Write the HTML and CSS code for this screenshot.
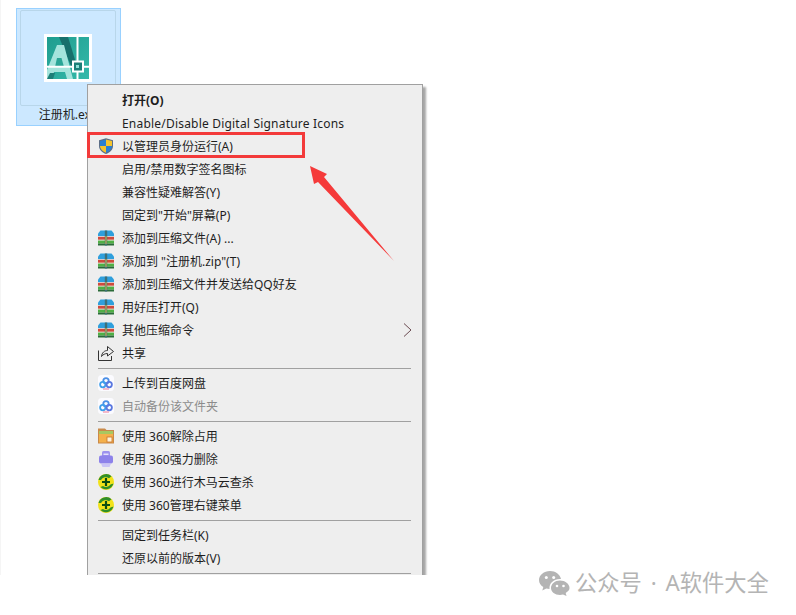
FILE: index.html
```html
<!DOCTYPE html>
<html lang="en">
<head>
    <meta charset="UTF-8">
    <title>Context menu</title>
    <link rel="stylesheet" href="styles.css">
</head>
<body>
    <svg class="defs" width="0" height="0">
        <symbol id="i-rar" viewBox="0 0 16 16">
            <path d="M2.500 0.500h11l2.500 3V6H0V3.500z" fill="#2f9fdc"/>
            <rect x="0" y="6" width="16" height="0.800" fill="#d8e8ee"/>
            <rect x="0" y="6.800" width="16" height="3" fill="#cf4a3c"/>
            <rect x="0" y="9.800" width="16" height="0.800" fill="#e8e0c8"/>
            <rect x="0" y="10.600" width="16" height="3" fill="#4fb045"/>
            <rect x="0" y="13.600" width="16" height="1.900" fill="#2a6a38"/>
            <rect x="6.800" y="0.500" width="2.400" height="15" fill="#3d6f78"/>
            <rect x="7.500" y="6" width="1" height="8" fill="#e6c04a"/>
        </symbol>
        <symbol id="i-baidu" viewBox="0 0 16 16">
            <rect width="16" height="16" rx="3.500" fill="#fbfbff"/>
            <circle cx="8" cy="5.800" r="2.700" fill="none" stroke="#4a8fe6" stroke-width="1.800"/>
            <circle cx="4.800" cy="9.600" r="2.700" fill="none" stroke="#3f9fea" stroke-width="1.800"/>
            <circle cx="11.200" cy="9.600" r="2.700" fill="none" stroke="#5a78e0" stroke-width="1.800"/>
            <path d="M5 14h6" stroke="#f08fa8" stroke-width="1.200"/>
        </symbol>
        <symbol id="i-360" viewBox="0 0 16 16">
            <circle cx="8" cy="8" r="8" fill="#f2e21a"/>
            <path d="M0.500 6A7.800 7.800 0 0 1 13.500 2.300L11 4.300A5.500 5.500 0 0 0 3 6z" fill="#2f8f2a"/>
            <path d="M2.500 13A7.800 7.800 0 0 0 15.500 9.500L12.500 10.500A5.500 5.500 0 0 1 5 12z" fill="#2f8f2a"/>
            <path d="M8 4v8M4 8h8" stroke="#0d4f12" stroke-width="2.200"/>
        </symbol>
    </svg>

    <div class="shot">
        <div class="tile">
            <div class="tile-frame">
                <svg class="app-icon" width="48" height="48" viewBox="0 0 48 48">
                    <defs>
                        <linearGradient id="teal" x1="0" y1="0" x2="1" y2="1">
                            <stop offset="0" stop-color="#1f9d8f"/>
                            <stop offset="1" stop-color="#35b9aa"/>
                        </linearGradient>
                    </defs>
                    <rect width="48" height="48" fill="#fff"/>
                    <rect x="3" y="3" width="42" height="42" fill="url(#teal)"/>
                    <path d="M15 3H24L33 32H27z" fill="#17706c"/>
                    <path d="M3 45V36L13 11H20L29 45H23L21 38H10L8 45z" fill="#a4e4dc"/>
                    <path d="M13 24L11 33H20L17.500 24z" fill="#2aa596"/>
                    <path d="M3 45H9L11 39H6z" fill="#1c7f78"/>
                    <path d="M33.500 3v42" stroke="#fff" stroke-width="2"/>
                    <path d="M3 32.700h42" stroke="#fff" stroke-width="2"/>
                    <rect x="29" y="27.500" width="10" height="10" fill="#1a7f78" stroke="#fff" stroke-width="2"/>
                    <rect x="32" y="31" width="3" height="3" fill="#8fe0d6"/>
                </svg>
            </div>
            <div class="tile-name">注册机.exe</div>
        </div>

        <div class="menu">
            <div class="row"><span class="ico"></span><b>打开(O)</b></div>
            <div class="row"><span class="ico"></span><span class="latin">Enable/Disable Digital Signature Icons</span></div>
            <div class="row">
                <span class="ico">
                    <svg width="16" height="16" viewBox="0 0 16 16">
                        <path d="M8 0.200L15 2.300V8C15 12 11.500 14.700 8 16C4.500 14.700 1 12 1 8V2.300z" fill="#5b6d86"/>
                        <path d="M8 1.400V8H2V3.100z" fill="#2a7fd0"/>
                        <path d="M8 1.400V8H14V3.100z" fill="#f5c42c"/>
                        <path d="M8 8H2C2.200 11.300 5.200 13.700 8 14.800z" fill="#f5c42c"/>
                        <path d="M8 8H14C13.800 11.300 10.800 13.700 8 14.800z" fill="#2a7fd0"/>
                    </svg>
                </span>
                <span>以管理员身份运行(A)</span>
            </div>
            <div class="row"><span class="ico"></span><span>启用/禁用数字签名图标</span></div>
            <div class="row"><span class="ico"></span><span>兼容性疑难解答(Y)</span></div>
            <div class="row"><span class="ico"></span><span>固定到"开始"屏幕(P)</span></div>
            <div class="row"><span class="ico"><svg width="16" height="16"><use href="#i-rar"/></svg></span><span>添加到压缩文件(A) ...</span></div>
            <div class="row"><span class="ico"><svg width="16" height="16"><use href="#i-rar"/></svg></span><span>添加到 "注册机.zip"(T)</span></div>
            <div class="row"><span class="ico"><svg width="16" height="16"><use href="#i-rar"/></svg></span><span>添加到压缩文件并发送给QQ好友</span></div>
            <div class="row"><span class="ico"><svg width="16" height="16"><use href="#i-rar"/></svg></span><span>用好压打开(Q)</span></div>
            <div class="row">
                <span class="ico"><svg width="16" height="16"><use href="#i-rar"/></svg></span>
                <span>其他压缩命令</span>
                <svg class="chev" width="9" height="14" viewBox="0 0 9 14"><path d="M1 0.500L8 7L1 13.500" fill="none" stroke="#6a4a50" stroke-width="1"/></svg>
            </div>
            <div class="row">
                <span class="ico">
                    <svg width="16" height="16" viewBox="0 0 16 16" fill="none" stroke="#333" stroke-width="1">
                        <path d="M0.500 5.500V15.500H13.500V11"/>
                        <path d="M3.500 11.500C4 7.500 6.500 5.500 9.500 5.500V1.500L15.500 6.500L9.500 11V8.500C7 8.500 5 9.500 3.500 11.500z"/>
                    </svg>
                </span>
                <span>共享</span>
            </div>
            <div class="sep"></div>
            <div class="row"><span class="ico"><svg width="16" height="16"><use href="#i-baidu"/></svg></span><span>上传到百度网盘</span></div>
            <div class="row off"><span class="ico"><svg width="16" height="16"><use href="#i-baidu"/></svg></span><span>自动备份该文件夹</span></div>
            <div class="sep"></div>
            <div class="row">
                <span class="ico">
                    <svg width="16" height="16" viewBox="0 0 16 16">
                        <path d="M0 0.500H7L8.500 2H16V15.500H0z" fill="#c98a4a"/>
                        <rect x="1" y="3" width="14" height="3" fill="#a8c860"/>
                        <rect x="1" y="6" width="14" height="8.500" fill="#f4b04a"/>
                        <rect x="9" y="9" width="5" height="5" fill="#fff3d8" stroke="#c9702a" stroke-width="0.800"/>
                    </svg>
                </span>
                <span>使用 360解除占用</span>
            </div>
            <div class="row">
                <span class="ico">
                    <svg width="16" height="16" viewBox="0 0 16 16">
                        <rect x="4" y="0" width="8" height="6" rx="1.500" fill="#9c92ee"/>
                        <rect x="1" y="4.500" width="14" height="8" rx="2" fill="#8d82ea"/>
                        <rect x="5.500" y="2.500" width="5" height="1.500" fill="#e4e0fb"/>
                        <path d="M3 12.500H13L11.500 16H4.500z" fill="#c9c4f6"/>
                    </svg>
                </span>
                <span>使用 360强力删除</span>
            </div>
            <div class="row"><span class="ico"><svg width="16" height="16"><use href="#i-360"/></svg></span><span>使用 360进行木马云查杀</span></div>
            <div class="row"><span class="ico"><svg width="16" height="16"><use href="#i-360"/></svg></span><span>使用 360管理右键菜单</span></div>
            <div class="sep"></div>
            <div class="row"><span class="ico"></span><span>固定到任务栏(K)</span></div>
            <div class="row"><span class="ico"></span><span>还原以前的版本(V)</span></div>
            <div class="sep"></div>
        </div>

        <div class="mark-box"></div>
        <svg class="mark-arrow" width="90" height="100" viewBox="0 0 90 100">
            <path d="M1 1L18 9L15 12L85 96L9 17L5 19z" fill="#f53a3a"/>
        </svg>
    </div>

    <div class="watermark">
        <svg width="31" height="25" viewBox="0 0 31 25">
            <path d="M11 0C5 0 0 4 0 9C0 12 1.700 14.500 4.300 16L3.300 19.500L7.300 17.500C8.300 17.800 9.500 18 10.500 18C10 12 15 7.500 22 8C21 3.500 16.500 0 11 0z" fill="#b4b4b4"/>
            <circle cx="7.300" cy="6.500" r="1.500" fill="#fff"/>
            <circle cx="14.700" cy="6.500" r="1.500" fill="#fff"/>
            <path d="M21 9.500C16 9.500 12 13 12 17C12 21 16 24 21 24C22 24 23 23.800 24 23.500L27.500 25L26.700 22C29 20.500 30.500 19 30.500 17C30.500 13 26 9.500 21 9.500z" fill="#b4b4b4"/>
            <circle cx="18" cy="15" r="1.300" fill="#fff"/>
            <circle cx="24.500" cy="15" r="1.300" fill="#fff"/>
        </svg>
        <span>公众号 · A软件大全</span>
    </div>
</body>
</html>
```

FILE: styles.css
```css
* {
    margin: 0;
    padding: 0;
    box-sizing: border-box;
}

body {
    font-family: "Noto Sans", "Noto Sans CJK SC", sans-serif;
    background-color: #fff;
    height: 615px;
    overflow: hidden;
    position: relative;
}

.defs {
    position: absolute;
}

.shot {
    position: relative;
    height: 575px;
    overflow: hidden;
    padding: 8px 0 0 16px;
    border-left: 1px solid #f5f5f5;
}

.tile {
    width: 105px;
    height: 118px;
    margin-left: -1px;
    background-color: #cce8ff;
    border: 1px solid #99d1ff;
    padding: 1px 4px 0 3px;
}

.tile-frame {
    height: 96px;
    border: 1px solid #b8d6ea;
    border-radius: 2px;
    padding: 23px 0 0 23px;
}

.app-icon {
    display: block;
}

.tile-name {
    font-size: 12px;
    line-height: 18px;
    text-align: center;
    color: #222;
    white-space: nowrap;
}

.menu {
    position: absolute;
    left: 86px;
    top: 84px;
    width: 336px;
    background-color: #eee;
    border: 1px solid #a0a0a0;
    box-shadow: 3px 3px 2px rgba(0, 0, 0, 0.35);
    padding: 3.500px 0 0 10px;
    font-size: 12px;
    color: #1e1e1e;
}

.row {
    display: flex;
    align-items: center;
    height: 23px;
    white-space: nowrap;
    position: relative;
}

.row b {
    font-weight: 700;
}

.latin {
    letter-spacing: 0.2px;
}

.off {
    color: #8c8c8c;
}

.ico {
    width: 16px;
    height: 16px;
    margin-right: 8px;
    flex-shrink: 0;
}

.ico svg {
    display: block;
}

.chev {
    position: absolute;
    left: 305px;
    top: 4px;
}

.sep {
    height: 1px;
    width: 313px;
    margin: 3px 0;
    background-color: #a0a0a0;
}

.mark-box {
    position: absolute;
    left: 86px;
    top: 132px;
    width: 218px;
    height: 26px;
    border: 3px solid #f33a3a;
}

.mark-arrow {
    position: absolute;
    left: 308px;
    top: 165px;
}

.watermark {
    position: absolute;
    left: 539px;
    top: 569px;
    display: flex;
    align-items: center;
    gap: 5px;
    color: #b4b4b4;
    font-size: 22.300px;
    line-height: 28px;
    white-space: nowrap;
    word-spacing: 3px;
}
```
